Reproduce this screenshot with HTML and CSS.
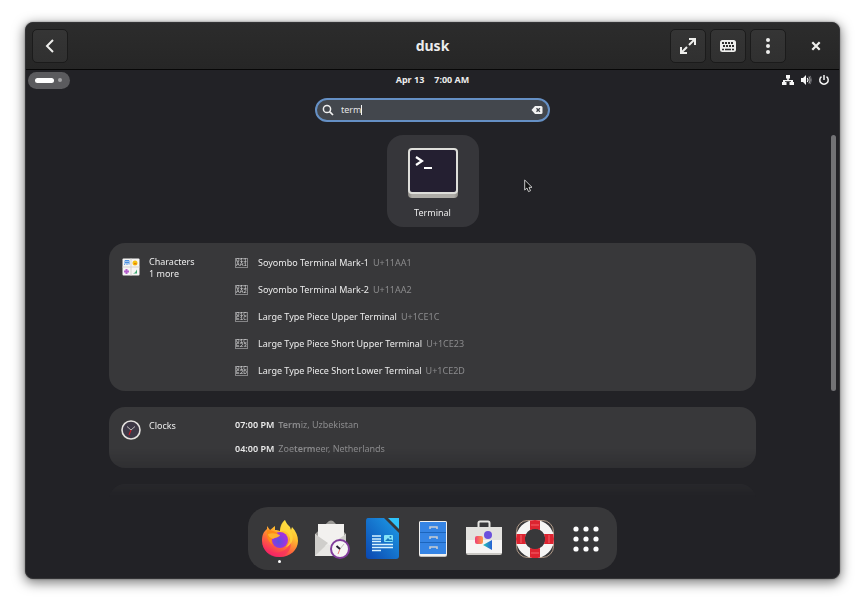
FILE: index.html
```html
<!DOCTYPE html>
<html lang="en">
<head>
<meta charset="utf-8">
<title>dusk</title>
<link rel="stylesheet" href="styles.css">
</head>
<body>
<div class="window">
  <header class="titlebar">
    <div class="side">
      <button class="tool" aria-label="Back"><svg width="16" height="16" viewBox="0 0 16 16"><path d="M11 2L5 8l6 6" fill="none" stroke="#eeeeec" stroke-width="2"/></svg></button>
    </div>
    <h1>dusk</h1>
    <div class="side end">
      <button class="tool" aria-label="Fullscreen"><svg width="16" height="16" viewBox="0 0 16 16"><path d="M9 1h6v6M14 2L9 7M7 15H1V9M2 14l5-5" fill="none" stroke="#eeeeec" stroke-width="2"/></svg></button>
      <button class="tool" aria-label="Keyboard"><svg width="16" height="16" viewBox="0 0 16 16"><rect y="2" width="16" height="12" rx="2.500" fill="#eeeeec"/><path d="M2 5h12" stroke="#2f2f2f" stroke-width="2" stroke-dasharray="2 1"/><path d="M3 8h11" stroke="#2f2f2f" stroke-width="2" stroke-dasharray="2 1"/><path d="M2 11.500h2m1 0h6m1 0h2" stroke="#2f2f2f" stroke-width="1.500"/></svg></button>
      <button class="tool" aria-label="Menu"><svg width="16" height="16" viewBox="0 0 16 16" fill="#eeeeec"><circle cx="8" cy="2" r="2"/><circle cx="8" cy="8" r="2"/><circle cx="8" cy="14" r="2"/></svg></button>
      <button class="tool plain" aria-label="Close"><svg width="16" height="16" viewBox="0 0 16 16"><path d="M4.300 4.300l7.400 7.400m0-7.400l-7.400 7.400" stroke="#eeeeec" stroke-width="2.200"/></svg></button>
    </div>
  </header>

  <main class="desktop">
    <div class="panel">
      <div class="side"><button class="activities" aria-label="Activities"><span class="pill"></span><span class="dot"></span></button></div>
      <button class="clock"><span>Apr 13</span><span>7:00 AM</span></button>
      <div class="side end">
        <button class="status" aria-label="System">
          <svg width="12" height="12" viewBox="0 0 12 12"><path d="M4 1h4v3.500H6.800V6H11v2h1v3H7.500V8H9V7.300H3V8h1.500v3H0V8h1V6h4.200V4.500H4z" fill="#f6f6f6"/></svg>
          <svg width="12" height="12" viewBox="0 0 12 12"><path d="M1 4h2l3-3v10L3 8H1z" fill="#f6f6f6"/><path d="M7.300 4q1.400 2 0 4" fill="none" stroke="#f6f6f6" stroke-width="1.300"/><path d="M8.800 2.500q2.600 3.500 0 7" fill="none" stroke="#aaa" stroke-width="1.200"/><path d="M10.300 1.800q2.400 4.200 0 8.400" fill="none" stroke="#65656a"/></svg>
          <svg width="12" height="12" viewBox="0 0 12 12"><path d="M3.500 2.600a4.200 4.200 0 1 0 5 0M6 1v5" fill="none" stroke="#f6f6f6" stroke-width="1.500"/></svg>
        </button>
      </div>
    </div>

    <label class="search">
      <svg width="12" height="12" viewBox="0 0 12 12"><circle cx="5" cy="5" r="3.600" fill="none" stroke="#f0f0f0" stroke-width="1.500"/><path d="M7.600 7.600L11 11" stroke="#f0f0f0" stroke-width="1.700"/></svg>
      <input type="text" value="term" aria-label="Type to search">
      <span class="caret"></span>
      <button class="clear" aria-label="Clear"><svg width="12" height="12" viewBox="0 0 12 12"><path d="M4 2h6q1.500 0 1.500 1.500v5Q11.500 10 10 10H4L.5 6z" fill="#f2f2f2"/><path d="M5.500 4.200l3.400 3.600m0-3.600L5.500 7.800" stroke="#43474d" stroke-width="1.300"/></svg></button>
    </label>

    <div class="scroller">
      <button class="app">
        <svg width="50" height="50" viewBox="0 0 50 50"><defs><linearGradient id="tb"><stop stop-color="#8a8883"/><stop offset=".08" stop-color="#aeaca7"/><stop offset=".92" stop-color="#aeaca7"/><stop offset="1" stop-color="#8a8883"/></linearGradient></defs><rect y="5" width="50" height="45" rx="4" fill="url(#tb)"/><rect width="50" height="46" rx="4" fill="#dededa"/><rect x="2" y="2" width="46" height="42" rx="2" fill="#241f31"/><path d="M8 9l6 4-6 4" fill="none" stroke="#fff" stroke-width="2.200"/><path d="M16 20h8" stroke="#fff" stroke-width="2"/></svg>
        <span>Terminal</span>
      </button>

      <section class="card">
        <svg class="provider" width="20" height="20" viewBox="0 0 20 20"><g transform="translate(0 1)"><rect x="1.500" y="1.500" width="17" height="17" rx="1" fill="#f6f5f4"/><path d="M10 1.500v17M1.500 10h17" stroke="#d4d2cf"/><path d="M4 3.500h4v4M4 3.500v3L3.500 8M4 5.500h4M6 3.500V8" fill="none" stroke="#4b91e2"/><circle cx="14" cy="6" r="2.500" fill="#f5c211"/><path d="M13 6.800h2.500" stroke="#e66100"/><path d="M5.500 12v5M3 14.500h5" stroke="#b35fcb" stroke-width="2"/><path d="M12 16.500l2-1 2-3v4z" fill="#40a873"/></g></svg>
        <h2>Characters<small>1 more</small></h2>
        <ul class="glyphs">
          <li><i>011 AA1</i><b>Soyombo Terminal Mark-1</b><span>U+11AA1</span></li>
          <li><i>011 AA2</i><b>Soyombo Terminal Mark-2</b><span>U+11AA2</span></li>
          <li><i>01C E1C</i><b>Large Type Piece Upper Terminal</b><span>U+1CE1C</span></li>
          <li><i>01C E23</i><b>Large Type Piece Short Upper Terminal</b><span>U+1CE23</span></li>
          <li><i>01C E2D</i><b>Large Type Piece Short Lower Terminal</b><span>U+1CE2D</span></li>
        </ul>
      </section>

      <section class="card">
        <svg class="provider" width="20" height="20" viewBox="0 0 20 20"><circle cx="10" cy="10" r="9" fill="#3d3846" stroke="#e4e2df" stroke-width="1.600"/><path d="M6 6.500l4 3.500 4-3.500" fill="none" stroke="#c0bfbc"/><path d="M10 10l-2 5" stroke="#c01c28" stroke-width="1.200"/></svg>
        <h2>Clocks</h2>
        <ul class="times">
          <li><b>07:00 PM</b><span><strong>Term</strong>iz, Uzbekistan</span></li>
          <li><b>04:00 PM</b><span>Zoe<strong>term</strong>eer, Netherlands</span></li>
        </ul>
      </section>

      <section class="card empty"></section>
      <div class="scrollbar"></div>
    </div>

    <nav class="dock">
      <button class="running" aria-label="Firefox"><svg width="40" height="40" viewBox="0 0 40 40"><defs><linearGradient id="fa" x1=".8" y1="0" x2=".25" y2="1"><stop stop-color="#fff44f"/><stop offset=".35" stop-color="#ffbd2e"/><stop offset=".65" stop-color="#ff6a3a"/><stop offset="1" stop-color="#f5156c"/></linearGradient><radialGradient id="fb" cx=".4" cy=".6"><stop stop-color="#5b4fe0"/><stop offset="1" stop-color="#a033e0"/></radialGradient></defs><path d="M25 1c1 3 3 5 5 7l1 3 1-3c4 4 6 9 6 14 0 9-8 16-18 16S2 31 2 22c0-5 1-9 5-12l0-3 3 4c2-1 3-3 5-4l0 4c2 0 3 0 5 1 1-5 2-8 5-11z" fill="url(#fa)"/><path d="M2 20c0 11 9 16 18 13 8-2 11-8 9-15 5 9-1 20-11 20C9 38 2 31 2 20z" fill="#f62b62" opacity=".6"/><circle cx="20" cy="21" r="8" fill="url(#fb)"/><path d="M7 11c5 0 8 1 11 4-1 3-4 2-6 4-1 2-1 5 1 7-5-3-7-9-6-15z" fill="#ff8a16"/><path d="M8 15c3-1 6-1 9 0l3 1c-1 3-5 2-7 4-3-1-5-3-5-5z" fill="#ffb02e"/><path d="M20 13c3-2 7-1 9 3 2 5 0 9-3 12 7-2 9-11 4-17-3-4-6-5-5-10-4 3-5 7-5 12z" fill="#ffd83c" opacity=".8"/></svg></button>
      <button aria-label="Evolution"><svg width="40" height="40" viewBox="0 0 40 40"><path d="M4 15l14-13q2-1 4 0l13 13v22H4z" fill="#9a9996"/><path d="M4 15L20 28 35 15v22H4z" fill="#deddda"/><path d="M7 5h26v20l-13 4L7 25z" fill="#f2f1ef"/><path d="M4 15v22l13-13zM35 15v22L22 24z" fill="#cfcecb"/><path d="M4 37l13-12 3 2 4-2 11 12z" fill="#e8e7e4"/><circle cx="29" cy="30" r="9" fill="#f6f5f4" stroke="#813d9c" stroke-width="2"/><path d="M29 30l4-5" stroke="#c0bfbc"/><path d="M29 30l-2 5" stroke="#ed7b74"/><path d="M25.500 27l3.500 3" stroke="#241f31" stroke-width="2"/></svg></button>
      <button aria-label="LibreOffice Writer"><svg width="42" height="42" viewBox="0 0 42 42"><defs><linearGradient id="wa" x1="1" y1="0" x2="0" y2="1"><stop stop-color="#1e9ee8"/><stop offset="1" stop-color="#0b47b0"/></linearGradient></defs><path d="M7 0h16l15 15v23q0 3-3 3H8q-3 0-3-3V3q0-3 2-3z" fill="url(#wa)"/><path d="M27 0h11v11z" fill="#2fc3fa"/><path d="M11 18h9m-9 3h9m-9 2.500h9m-9 3h21m-21 3h21m-21 3h9" stroke="#d8f3ff" stroke-width="1.500"/><rect x="23" y="17" width="9" height="7" rx="1" fill="#84e4f8"/><path d="M24 23l3-3 2 2 1-1 2 2z" fill="#1475bb"/><circle cx="29.500" cy="19" r="1" fill="#1475bb"/></svg></button>
      <button aria-label="Files"><svg width="40" height="40" viewBox="0 0 40 40"><rect x="6" y="2" width="28" height="36" rx="2" fill="#c0bfbc"/><rect x="6" y="2" width="28" height="35" rx="2" fill="#f2f1ef"/><path d="M7 3h26v32H7z" fill="#3584e4"/><path d="M7 13.500h26M7 23.500h26" stroke="#1c65bc"/><path d="M17 10V8h7v2m-7 10v-2h7v2m-7 10v-2h7v2" fill="none" stroke="#c6cbd2" stroke-width="1.600"/></svg></button>
      <button aria-label="Software"><svg width="40" height="40" viewBox="0 0 40 40"><path d="M14.500 9V4q0-1.500 1.500-1.500h8q1.500 0 1.500 1.500v5" fill="none" stroke="#e6e5e2" stroke-width="2"/><rect x="2" y="8" width="36" height="28" rx="2" fill="#c9c7c3"/><path d="M2 8h36v26H2z" fill="#f6f5f4"/><path d="M2 8h36v13H2z" fill="#e3e2df"/><defs><linearGradient id="sa"><stop stop-color="#ee3f75"/><stop offset="1" stop-color="#ff9a4a"/></linearGradient><linearGradient id="sb"><stop stop-color="#25c9b5"/><stop offset="1" stop-color="#2860d4"/></linearGradient></defs><rect x="11" y="17" width="8" height="8" rx="2" fill="url(#sa)"/><circle cx="24" cy="16" r="4" fill="#6b50dc"/><path d="M19 26l9-5v10z" fill="url(#sb)"/></svg></button>
      <button aria-label="Help"><svg width="40" height="40" viewBox="0 0 40 40"><rect x="1.500" y="1.500" width="37" height="37" rx="11" fill="none" stroke="#b09a88"/><circle cx="20" cy="20" r="14.700" fill="none" stroke="#f6f5f4" stroke-width="8.600"/><path d="M15 1.500q5-1 10 0v9.500q-5-2-10 0zm0 27.500q5 2 10 0v9.500q-5 1-10 0zM1.500 15H11q-2 5 0 10H1.500q-1-5 0-10zM29 15h9.500q1 5 0 10H29q2-5 0-10z" fill="#dc2430"/><path d="M16 6h8M16 34h8M6 16v8M34 16v8" stroke="#e8444e" stroke-width="2"/></svg></button>
      <button aria-label="Show apps"><svg width="40" height="40" viewBox="0 0 40 40" fill="#fff"><circle cx="10" cy="10" r="2.600"/><circle cx="20" cy="10" r="2.600"/><circle cx="30" cy="10" r="2.600"/><circle cx="10" cy="20" r="2.600"/><circle cx="20" cy="20" r="2.600"/><circle cx="30" cy="20" r="2.600"/><circle cx="10" cy="30" r="2.600"/><circle cx="20" cy="30" r="2.600"/><circle cx="30" cy="30" r="2.600"/></svg></button>
    </nav>
    <svg class="pointer" width="9" height="14" viewBox="0 0 9 14"><path d="M.7 1v10l2.200-2 1.600 3.600 2-.9L5 8.300h3z" fill="#111" stroke="#ddd" stroke-width=".9"/></svg>
  </main>
</div>
</body>
</html>
```
FILE: styles.css
```css
* { box-sizing: border-box; }

body {
  display: flex;
  min-height: 100vh;
  margin: 0;
  padding: 22px 25px 28px;
  background: #fff;
  color: #ececec;
  font: 9px/12px "Noto Sans", sans-serif;
}

button {
  padding: 0;
  border: 0;
  background: none;
  color: inherit;
  font: inherit;
}

svg { display: block; flex: none; }
ul { margin: 0; padding: 0; list-style: none; }

.window {
  flex: 1;
  display: flex;
  flex-direction: column;
  border: 1px solid #343436;
  border-radius: 8px;
  overflow: hidden;
  background: #222226;
  box-shadow: 0 3px 12px 1px rgba(0, 0, 0, .5), 0 0 2px rgba(0, 0, 0, .4);
}

.side { flex: 1; display: flex; align-items: center; }
.end { justify-content: flex-end; }

.titlebar {
  display: flex;
  align-items: center;
  height: 47px;
  padding: 0 6px;
  border-bottom: 1px solid #070707;
  background: linear-gradient(#2c2c2c, #262626);
}

.titlebar h1 { margin: 0; font-size: 14px; line-height: 20px; }
.titlebar .end { gap: 4px; }

.tool {
  display: flex;
  align-items: center;
  justify-content: center;
  width: 36px;
  height: 34px;
  border: 1px solid #1b1b1b;
  border-radius: 5px;
  background: linear-gradient(#353535, #303030);
}

.tool.plain { margin: 0 -1px 0 8px; border-color: transparent; background: none; }

.desktop {
  position: relative;
  flex: 1;
  display: flex;
  flex-direction: column;
  align-items: center;
  padding-bottom: 8px;
}

.panel {
  display: flex;
  align-items: center;
  align-self: stretch;
  height: 20px;
  padding: 0 9px 0 2px;
}

.activities {
  display: flex;
  align-items: center;
  gap: 4px;
  width: 42px;
  height: 17px;
  padding: 0 7px;
  border-radius: 9px;
  background: #5b5b5e;
}

.pill { width: 19px; height: 5px; border-radius: 3px; background: #fff; }
.dot { width: 4px; height: 4px; border-radius: 2px; background: #a5a5a7; }
.clock { display: flex; gap: 10px; margin-left: 7px; font-weight: 700; }
.status { display: flex; gap: 6px; }

.search {
  display: flex;
  align-items: center;
  width: 235px;
  height: 24px;
  margin: 8px 0 13px;
  padding: 0 5px;
  border: 2px solid #6590c5;
  border-radius: 12px;
  background: #43474d;
}

.search input {
  field-sizing: content;
  margin-left: 7px;
  padding: 0;
  border: 0;
  outline: 0;
  background: none;
  color: #e4e4e5;
  font: inherit;
}

.caret { width: 1px; height: 10px; background: #f4f4f4; }
.clear { margin-left: auto; }

.scroller {
  position: relative;
  flex: 1 1 0;
  align-self: stretch;
  display: flex;
  flex-direction: column;
  min-height: 362px;
  padding: 0 83px;
  overflow: hidden;
  -webkit-mask-image: linear-gradient(#000 calc(100% - 48px), transparent);
  mask-image: linear-gradient(#000 calc(100% - 48px), transparent);
}

.app {
  display: flex;
  flex-direction: column;
  align-items: center;
  gap: 9px;
  align-self: center;
  width: 92px;
  padding: 13px 0 8px;
  border-radius: 16px;
  background: #36363a;
}

.card {
  display: grid;
  grid-template-columns: 20px 78px 1fr;
  column-gap: 8px;
  align-items: start;
  flex: none;
  margin-top: 16px;
  padding: 6px 12px 7px;
  border-radius: 16px;
  background: #38383a;
}

.card.empty { min-height: 60px; }
.provider { margin-top: 7px; }
.card h2 { margin: 7px 0 0; font-size: 9px; font-weight: 400; }
.card small { display: block; font-size: 9px; }
.card li { display: flex; align-items: center; }
.card b { font-weight: 400; }
.card li span { margin-left: 4px; color: #8b8b8d; }
.card strong { font-weight: 600; }
.glyphs li { height: 27px; }
.times li { height: 24px; }
.times b { font-weight: 600; }

.glyphs i {
  width: 13px;
  margin-right: 10px;
  border: 1px solid #858587;
  color: #d4d4d5;
  font: 6px/4px "Liberation Mono", monospace;
  text-align: center;
}

.scrollbar {
  position: absolute;
  top: 0;
  right: 3px;
  width: 5px;
  height: 256px;
  border-radius: 3px;
  background: #727275;
}

.dock {
  display: flex;
  margin-top: 10px;
  padding: 0 6px;
  border-radius: 20px;
  background: #38383a;
}

.dock button {
  position: relative;
  display: flex;
  align-items: center;
  justify-content: center;
  width: 51px;
  height: 63px;
}

.running::after {
  content: "";
  position: absolute;
  bottom: 7px;
  width: 3px;
  height: 3px;
  border-radius: 2px;
  background: #fff;
}

.pointer { position: absolute; top: 109px; left: 61.300%; }
```
